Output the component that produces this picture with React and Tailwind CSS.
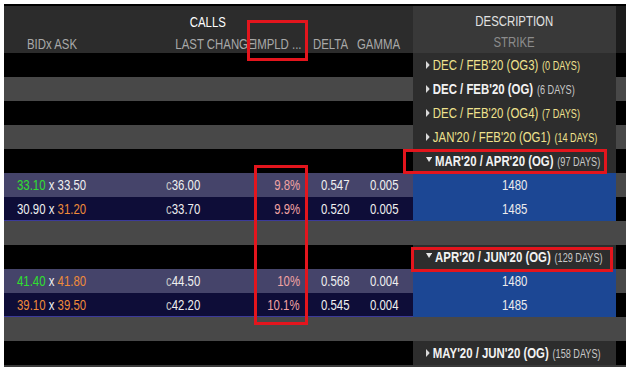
import React from 'react'

const BLACK = 'bg-black'
const GRAY = 'bg-[#484848]'
const PURPLE = 'bg-[#45446a]'
const NAVY = 'bg-[#0e0d38] border-b border-[#3b3a9a]'
const DARK = 'bg-[#2d2d2d]'
const BLUE = 'bg-[#1c4794]'

// Arial Narrow look: Liberation Sans squeezed horizontally
const NL = ({ children, className = '' }) => (
    <span className={'inline-block whitespace-nowrap scale-x-[0.76] origin-left ' + className}>{children}</span>
)
const NR = ({ children, className = '' }) => (
    <span className={'inline-block whitespace-nowrap scale-x-[0.76] origin-right ' + className}>{children}</span>
)
const NC = ({ children, className = '' }) => (
    <span className={'inline-block whitespace-nowrap scale-x-[0.76] origin-center ' + className}>{children}</span>
)

const Tri = ({ open }) =>
    open ? (
        <svg width="8" height="5" viewBox="0 0 8 5" className="shrink-0 mr-[4px] mb-[3px] inline-block">
            <path d="M0 0 L8 0 L4 5 Z" fill="#e8e8e8" />
        </svg>
    ) : (
        <svg width="5" height="8" viewBox="0 0 5 8" className="shrink-0 mr-[4px] mb-[1px] inline-block">
            <path d="M0 0 L5 4 L0 8 Z" fill="#d8d8d8" />
        </svg>
    )

const Expiry = ({ label, days, bold, open }) => (
    <div className="flex items-center h-full pl-[13px]">
        <NL className="leading-[16px]">
            <Tri open={open} />
            {bold ? (
                <span className="text-[15px] font-bold text-[#f2f2f2]">{label}</span>
            ) : (
                <span className="text-[15px] text-[#efe28e]">{label}</span>
            )}
            <span className={'ml-[5px] text-[12px] ' + (bold ? 'text-[#c8c8c8]' : 'text-[#efe28e]')}>{days}</span>
        </NL>
    </div>
)

const Quote = ({ bid, bidC, ask, askC, last, iv, delta, gamma }) => (
    <>
        <div className="w-[146px] pl-[13px] text-[15px]">
            <NL>
                <span className={bidC}>{bid}</span>
                <span className="text-[#f0f0f0]"> x </span>
                <span className={askC}>{ask}</span>
            </NL>
        </div>
        <div className="w-[102px] pl-[16px] text-[15px] text-[#f0f0f0]">
            <NL>
                <span className="text-[#c4c4c4]">c</span>
                {last}
            </NL>
        </div>
        <div className="w-[54px] pr-[6px] text-right text-[15px] text-[#f2a3a3]">
            <NR>{iv}</NR>
        </div>
        <div className="w-[48px] pr-[4px] text-right text-[15px] text-[#f0f0f0]">
            <NR>{delta}</NR>
        </div>
        <div className="w-[51px] pr-[6px] text-right text-[15px] text-[#f0f0f0]">
            <NR>{gamma}</NR>
        </div>
    </>
)

const GREEN = 'text-[#2fe02f]'
const ORANGE = 'text-[#f08b3a]'
const WHITE = 'text-[#f0f0f0]'

const rows = [
    { left: BLACK, strip: BLACK, desc: DARK, d: <Expiry label="DEC / FEB'20 (OG3)" days="(0 DAYS)" /> },
    { left: GRAY, strip: GRAY, desc: DARK, d: <Expiry label="DEC / FEB'20 (OG)" days="(6 DAYS)" bold /> },
    { left: BLACK, strip: BLACK, desc: DARK, d: <Expiry label="DEC / FEB'20 (OG4)" days="(7 DAYS)" /> },
    { left: GRAY, strip: GRAY, desc: DARK, d: <Expiry label="JAN'20 / FEB'20 (OG1)" days="(14 DAYS)" /> },
    { left: BLACK, strip: BLACK, desc: DARK, d: <Expiry label="MAR'20 / APR'20 (OG)" days="(97 DAYS)" bold open /> },
    {
        left: PURPLE, strip: GRAY, desc: BLUE, strike: '1480',
        q: { bid: '33.10', bidC: GREEN, ask: '33.50', askC: WHITE, last: '36.00', iv: '9.8%', delta: '0.547', gamma: '0.005' },
    },
    {
        left: NAVY, strip: BLACK, desc: BLUE, strike: '1485',
        q: { bid: '30.90', bidC: WHITE, ask: '31.20', askC: ORANGE, last: '33.70', iv: '9.9%', delta: '0.520', gamma: '0.005' },
    },
    { left: GRAY, strip: GRAY, desc: GRAY },
    { left: BLACK, strip: BLACK, desc: DARK, d: <Expiry label="APR'20 / JUN'20 (OG)" days="(129 DAYS)" bold open /> },
    {
        left: PURPLE, strip: GRAY, desc: BLUE, strike: '1480',
        q: { bid: '41.40', bidC: GREEN, ask: '41.80', askC: ORANGE, last: '44.50', iv: '10%', delta: '0.568', gamma: '0.004' },
    },
    {
        left: NAVY, strip: BLACK, desc: BLUE, strike: '1485',
        q: { bid: '39.10', bidC: ORANGE, ask: '39.50', askC: ORANGE, last: '42.20', iv: '10.1%', delta: '0.545', gamma: '0.004' },
    },
    { left: GRAY, strip: GRAY, desc: GRAY },
    { left: BLACK, strip: BLACK, desc: DARK, d: <Expiry label="MAY'20 / JUN'20 (OG)" days="(158 DAYS)" bold /> },
]

const Box = ({ className }) => <div className={'absolute border-[3px] border-[#e3151d] ' + className}></div>

export default function App() {
    return (
        <div className="relative w-[631px] h-[378px] bg-white overflow-hidden font-['Liberation_Sans',Arial,sans-serif]">
            <div className="ml-[4px] mt-[4px] w-[622px] border-t-2 border-black border-b-2 border-b-[#3a3a3a]">
                {/* header */}
                <div className="flex h-[47px]">
                    <div className="w-[405px] bg-[#2c2c2c] pt-[8px]">
                        <div className="h-[16px] leading-[16px] text-center text-[15px] text-white pl-[2px]">
                            <NC>CALLS</NC>
                        </div>
                        <div className="flex mt-[6px] h-[16px] leading-[16px] text-[15px] text-[#a9a9a9]">
                            <div className="w-[146px] pl-[23px]">
                                <NL>BIDx ASK</NL>
                            </div>
                            <div className="w-[102px] pr-[2px] text-right">
                                <NR>LAST CHANGE</NR>
                            </div>
                            <div className="w-[54px] pl-[2px]">
                                <NL>IMPLD ...</NL>
                            </div>
                            <div className="w-[48px] pl-[7px]">
                                <NL>DELTA</NL>
                            </div>
                            <div className="w-[51px] pl-[3px]">
                                <NL>GAMMA</NL>
                            </div>
                        </div>
                    </div>
                    <div className="w-[4px] bg-[#2c2c2c]"></div>
                    <div className="w-[203px] bg-[#393939] pt-[7px] text-center text-[15px]">
                        <div className="h-[16px] leading-[16px] text-[#e2e2e2]">
                            <NC>DESCRIPTION</NC>
                        </div>
                        <div className="mt-[5px] h-[16px] leading-[16px] text-[#8c8c8c]">
                            <NC>STRIKE</NC>
                        </div>
                    </div>
                    <div className="flex-1 bg-[#1c1c1c]"></div>
                </div>

                {/* rows */}
                {rows.map((r, i) => (
                    <div key={i} className="flex h-[24px]">
                        <div className={'w-[409px] flex items-center leading-[16px] ' + r.left}>
                            {r.q && <Quote {...r.q} />}
                        </div>
                        <div className={'w-[203px] ' + r.desc}>
                            {r.strike && (
                                <div className="h-full flex items-center justify-center text-[15px] text-[#ececec]">
                                    <NC>{r.strike}</NC>
                                </div>
                            )}
                            {r.d}
                        </div>
                        <div className={'flex-1 ' + r.strip}></div>
                    </div>
                ))}
            </div>

            {/* annotation boxes */}
            <Box className="left-[247px] top-[20px] w-[61px] h-[41px]" />
            <Box className="left-[254px] top-[165px] w-[54px] h-[160px]" />
            <Box className="left-[403px] top-[149px] w-[204px] h-[25px]" />
            <Box className="left-[411px] top-[247px] w-[202px] h-[25px]" />
        </div>
    )
}
